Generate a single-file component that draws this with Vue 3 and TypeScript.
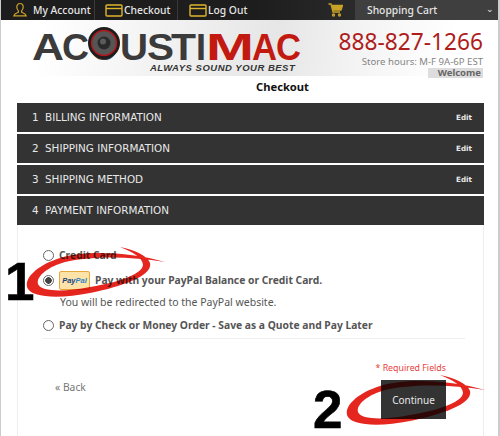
<template>
  <div class="page">
    <nav class="topbar">
      <a class="nav-item account">
        <svg width="16" height="16" viewBox="0 0 16 16" fill="none" stroke="#c9a227" stroke-width="1.2">
          <path d="M8 1.500c-2 0-3.200 1.600-3.200 3.600 0 1.600.7 3 1.600 3.800v1.300c-1.500.8-4 1.200-4.600 3.600h12.400c-.6-2.400-3.100-2.800-4.600-3.600V8.900c.9-.8 1.600-2.200 1.600-3.800C11.200 3.100 10 1.500 8 1.500z" />
        </svg>
        My Account
      </a>
      <a class="nav-item checkout">
        <svg width="18" height="13" viewBox="0 0 18 13" fill="none" stroke="#e0b52c" stroke-width="1.4">
          <rect x="1" y="1" width="16" height="11" rx="1" />
          <path d="M1 4.500h16" />
        </svg>
        Checkout
      </a>
      <a class="nav-item logout">
        <svg width="18" height="13" viewBox="0 0 18 13" fill="none" stroke="#e0b52c" stroke-width="1.4">
          <rect x="1" y="1" width="16" height="11" rx="1" />
          <path d="M1 4.500h16" />
        </svg>
        Log Out
      </a>
      <div class="cart-icon">
        <svg width="15" height="14" viewBox="0 0 15 14" fill="none" stroke="#c9a227" stroke-width="1.3">
          <path d="M0.500 1h2.500l2 8h7" />
          <path d="M3.500 2.500h11l-1.500 4.500H4.600" fill="#c9a227" />
          <circle cx="5.500" cy="12" r="1" />
          <circle cx="11.500" cy="12" r="1" />
        </svg>
      </div>
      <div class="cart">
        <span>Shopping Cart</span>
        <span class="caret">⌄</span>
      </div>
    </nav>

    <header class="brand">
      <svg class="logo" width="272" height="56" viewBox="0 0 272 56">
        <text
          v-for="l in logoLetters"
          :key="l.x"
          :x="l.x"
          y="40"
          :textLength="l.w"
          lengthAdjust="spacingAndGlyphs"
          :class="['logo-word', { red: l.red }]"
        >{{ l.ch }}</text>
        <circle cx="72" cy="23" r="16" fill="#1d1d1d" />
        <circle cx="72" cy="23" r="12.500" fill="#555" stroke="#b3161a" stroke-width="1.5" />
        <circle cx="72" cy="23" r="6.500" fill="#2a2a2a" />
        <circle cx="71" cy="21.500" r="3" fill="#5c5c5c" />
        <text x="118" y="51" class="logo-tag">ALWAYS SOUND YOUR BEST</text>
      </svg>
      <div class="contact">
        <div class="phone">888-827-1266</div>
        <div class="hours">Store hours: M-F 9A-6P EST</div>
        <div class="welcome">Welcome</div>
      </div>
    </header>

    <h1 class="title">Checkout</h1>

    <main class="checkout-box">
      <div v-for="s in steps" :key="s.num" class="step">
        <span class="num">{{ s.num }}</span>
        <span class="label">{{ s.label }}</span>
        <span v-if="s.edit" class="edit">Edit</span>
      </div>

      <div class="panel">
        <label class="opt first"><span class="radio"></span>Credit Card</label>
        <label class="opt paypal">
          <span class="radio on"></span>
          <span class="pp-badge"><i>Pay</i><i class="pal">Pal</i></span>
          Pay with your PayPal Balance or Credit Card.
        </label>
        <p class="note">You will be redirected to the PayPal website.</p>
        <label class="opt last"><span class="radio"></span>Pay by Check or Money Order - Save as a Quote and Pay Later</label>
        <div class="rule"></div>
        <div class="required">* Required Fields</div>
        <div class="actions">
          <a class="back">« Back</a>
          <button type="button" class="continue">Continue</button>
        </div>
      </div>
    </main>

    <!-- hand drawn annotations on top of the page -->
    <svg class="marks" width="500" height="436" viewBox="0 0 500 436">
      <g class="scribble" fill="#e5261f">
        <path :d="scribble" />
        <path :d="scribble" transform="translate(320 128)" />
      </g>
      <text x="5" y="300" class="big">1</text>
      <text x="313" y="428" class="big">2</text>
    </svg>
  </div>
</template>

<script setup lang="ts">
type Step = { num: number; label: string; edit: boolean };
type Letter = { ch: string; x: number; w: number; red: boolean };

const steps: Step[] = [
  { num: 1, label: "BILLING INFORMATION", edit: true },
  { num: 2, label: "SHIPPING INFORMATION", edit: true },
  { num: 3, label: "SHIPPING METHOD", edit: true },
  { num: 4, label: "PAYMENT INFORMATION", edit: false },
];

const logoLetters: Letter[] = [
  { ch: "A", x: 0, w: 32, red: false },
  { ch: "C", x: 30, w: 27, red: false },
  { ch: "O", x: 58, w: 28, red: false },
  { ch: "U", x: 88, w: 28, red: false },
  { ch: "S", x: 115, w: 27, red: false },
  { ch: "T", x: 139, w: 25, red: false },
  { ch: "I", x: 164, w: 10, red: false },
  { ch: "M", x: 174, w: 48, red: true },
  { ch: "A", x: 220, w: 25, red: true },
  { ch: "C", x: 244, w: 25, red: true },
];

// red pen ring, tail on the right, heaviest on the lower left
const scribble =
  "M165 262C130 252 85 250 60 258C38 265 25 277 27 287C30 298 60 299 90 293" +
  "C125 286 153 275 150 263C148 256 135 250 120 247C133 252 143 258 143 265" +
  "C142 275 115 283 90 287C65 292 41 292 38 284C36 277 47 267 65 262C90 256 130 256 165 262Z";
</script>

<style>
html,
body {
  margin: 0;
  background: #fff;
}
</style>

<style scoped>
.page {
  position: relative;
  width: 500px;
  height: 436px;
  overflow: hidden;
  background: #fff;
  font-family: "Noto Sans", "Open Sans", sans-serif;
  border-left: 1px solid #ccc;
  border-right: 2px solid #ccc;
  box-sizing: border-box;
}

.topbar {
  display: flex;
  align-items: stretch;
  height: 20px;
  margin: 0 -2px 0 -1px;
  background: #1d1d1d;
  color: #e6e6e6;
  font-size: 10.300px;
  font-weight: 500;
  white-space: nowrap;
}

.nav-item {
  display: flex;
  align-items: center;
  gap: 5px;
  border-right: 1px solid #3a3a3a;
}

.nav-item svg {
  flex: none;
}

.account {
  width: 95px;
  padding-left: 12px;
  box-sizing: border-box;
}

.checkout {
  width: 83px;
  gap: 1px;
  padding-left: 10px;
  box-sizing: border-box;
}

.logout {
  gap: 1px;
  padding-left: 11px;
  width: 76px;
  box-sizing: border-box;
  border-right: none;
}

.cart-icon {
  display: flex;
  align-items: center;
  justify-content: flex-end;
  width: 101px;
  padding-right: 12px;
  box-sizing: border-box;
  background: linear-gradient(90deg, #1d1d1d, #2a2a2a);
}

.cart {
  flex: 1;
  display: flex;
  align-items: center;
  justify-content: space-between;
  padding: 0 6px 0 12px;
  background: #3f3f3f;
}

.caret {
  font-size: 9px;
  line-height: 9px;
  margin-top: -3px;
}

.brand {
  display: flex;
  justify-content: space-between;
  height: 56px;
  padding: 0 15px 0 31px;
  background: linear-gradient(100deg, #fff 8%, #eee 40%, #e6e6e6 55%, #f4f4f4 72%, #fff 90%);
}

.logo-word {
  font-family: "Liberation Sans", sans-serif;
  font-size: 37px;
  font-weight: 700;
  fill: #3b3b3b;
}

.logo-word.red {
  fill: #c21a10;
}

.logo-tag {
  font-family: "Liberation Sans", sans-serif;
  font-size: 9.500px;
  font-weight: 700;
  font-style: italic;
  fill: #333;
  letter-spacing: 0.5px;
}

.contact {
  display: flex;
  flex-direction: column;
  align-items: flex-end;
  padding-top: 7px;
}

.phone {
  font-size: 22.700px;
  line-height: 29px;
  color: #ae1c1c;
}

.hours {
  font-size: 9.600px;
  line-height: 12px;
  color: #858585;
}

.welcome {
  padding: 0 2px 0 10px;
  font-size: 9.500px;
  font-weight: 700;
  line-height: 10px;
  color: #666;
  background: #ddd;
}

.title {
  margin: 0;
  padding-left: 255px;
  height: 27px;
  font-size: 11.200px;
  font-weight: 700;
  line-height: 22px;
  color: #111;
}

.checkout-box {
  margin: 0 14px 0 16px;
  font-family: "DejaVu Sans", sans-serif;
}

.step {
  display: flex;
  align-items: center;
  height: 29px;
  margin-bottom: 2px;
  padding: 0 12px 2px 15px;
  box-sizing: border-box;
  background: #333;
  color: #e8e8e8;
  font-size: 10.400px;
}

.num {
  width: 13px;
}

.edit {
  margin: 2px 0 0 auto;
  font-size: 7.200px;
  font-weight: 700;
}

.panel {
  position: relative;
  height: 300px;
  margin-top: -2px;
  padding: 23px 0 0 25px;
  border: 1px solid #eee;
  border-top: none;
  font-family: "Noto Sans", "Open Sans", sans-serif;
  font-size: 10.300px;
  font-weight: 700;
  color: #555;
}

.opt {
  display: flex;
  align-items: center;
  gap: 5px;
}

.radio {
  flex: none;
  width: 9px;
  height: 9px;
  border: 1px solid #666;
  border-radius: 50%;
  background: #fff;
}

.radio.on {
  background: radial-gradient(circle, #444 0 3px, #fff 3.5px);
}

.first {
  height: 14px;
}

.paypal {
  margin-top: 8px;
  height: 20px;
  gap: 5px;
}

.pp-badge {
  display: flex;
  align-items: center;
  justify-content: center;
  width: 31px;
  height: 19px;
  box-sizing: border-box;
  border: 1px solid #e5a63c;
  border-radius: 2px;
  background: #fde3a8;
  font-family: "Liberation Sans", sans-serif;
  font-size: 7.500px;
  font-weight: 700;
}

.pp-badge i {
  color: #1a3f80;
}

.pp-badge .pal {
  color: #2b84c6;
}

.note {
  margin: 5px 0 0 17px;
  font-size: 10.500px;
  font-weight: 400;
  line-height: 15px;
  height: 15px;
}

.last {
  margin-top: 8px;
  height: 14px;
}

.rule {
  height: 1px;
  margin: 6px 18px 0 0;
  background: #eee;
}

.required {
  margin: 23px 37px 0 0;
  text-align: right;
  font-size: 8.800px;
  font-weight: 400;
  line-height: 12px;
  color: #e8413c;
}

.actions {
  display: flex;
  align-items: flex-start;
  justify-content: space-between;
  margin: 6px 37px 0 12px;
}

.back {
  font-weight: 400;
  color: #777;
}

.continue {
  width: 65px;
  height: 39px;
  padding: 0;
  border: none;
  background: #333;
  color: #e6e6e6;
  font-family: "Noto Sans", sans-serif;
  font-size: 10px;
}

.marks {
  position: absolute;
  top: 0;
  left: -1px;
  pointer-events: none;
}

.scribble {
  mix-blend-mode: multiply;
}

.big {
  font-family: "Liberation Sans", sans-serif;
  font-size: 53px;
  font-weight: 700;
  fill: #000;
  stroke: #000;
  stroke-width: 0.6px;
}
</style>
